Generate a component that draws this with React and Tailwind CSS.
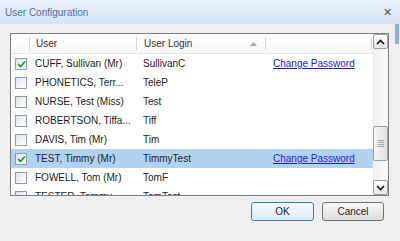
import React from 'react';

const users = [
  { name: 'CUFF, Sullivan (Mr)', login: 'SullivanC', checked: true },
  { name: 'PHONETICS, Terr...', login: 'TeleP' },
  { name: 'NURSE, Test (Miss)', login: 'Test' },
  { name: 'ROBERTSON, Tiffa...', login: 'Tiff' },
  { name: 'DAVIS, Tim (Mr)', login: 'Tim' },
  { name: 'TEST, Timmy (Mr)', login: 'TimmyTest', checked: true, selected: true },
  { name: 'FOWELL, Tom (Mr)', login: 'TomF' },
  { name: 'TESTER, Tommy...', login: 'TomTest' },
];

const CheckBox = ({ checked }) => (
  <div className="w-[12px] h-[12px] border border-[#8a9bb0] bg-gradient-to-br from-[#dfe4ea] to-[#ffffff] flex items-center justify-center">
    {checked && (
      <svg width="9" height="8" viewBox="0 0 9 8">
        <path d="M1 4 L3.5 6.5 L8 1.5" fill="none" stroke="#21a121" strokeWidth="1.8" />
      </svg>
    )}
  </div>
);

const Chevron = ({ up }) => (
  <svg width="9" height="6" viewBox="0 0 9 6">
    <path d={up ? 'M1 5 L4.5 1.5 L8 5' : 'M1 1 L4.5 4.5 L8 1'} fill="none" stroke="#111" strokeWidth="1.6" />
  </svg>
);

export default function App() {
  return (
    <div className="relative w-[400px] h-[241px] bg-[#efefef] flex flex-col font-['Liberation_Sans',Arial,sans-serif] text-[10px] text-[#222] overflow-hidden">
      <div className="h-[24px] shrink-0 flex items-center justify-between pl-[5px] pr-[8px] bg-gradient-to-b from-[#e8f0fa] to-[#d7e4f4]">
        <span className="text-[#4f6f9e]">User Configuration</span>
        <span className="text-[#555] text-[11px]">✕</span>
      </div>
      <div className="absolute right-[1px] top-[24px] w-[4px] h-[20px] bg-[#8cb0dc]" />

      <div className="flex-1 flex flex-col pl-[10px] pr-[11px] pt-[9px]">
        <div className="h-[163px] border border-[#7c7f85] bg-white flex">
          <div className="flex-1 flex flex-col overflow-hidden">
            <div className="h-[20px] shrink-0 flex items-center border-b border-[#e3e3e3] bg-gradient-to-b from-white to-[#f6f6f6] text-[#333]">
              <div className="w-[19px] h-[13px] border-r border-[#d5d5d5]" />
              <div className="w-[107px] h-[13px] border-r border-[#d5d5d5] pl-[6px] flex items-center">User</div>
              <div className="w-[129px] h-[13px] border-r border-[#d5d5d5] pl-[7px] pr-[8px] flex items-center justify-between">
                <span>User Login</span>
                <svg width="7" height="4" viewBox="0 0 7 4">
                  <path d="M0 4 L3.5 0 L7 4 Z" fill="#a8a8a8" />
                </svg>
              </div>
              <div className="w-[106px] h-[13px] border-r border-[#d5d5d5]" />
            </div>
            {users.map((u) => (
              <div
                key={u.name}
                className={`h-[19px] shrink-0 flex items-center ${u.selected ? 'bg-[#b3d2f0]' : ''}`}
              >
                <div className="w-[19px] pl-[4px]">
                  <CheckBox checked={u.checked} />
                </div>
                <div className="w-[107px] pl-[5px] whitespace-nowrap overflow-hidden">{u.name}</div>
                <div className="w-[129px] pl-[6px] whitespace-nowrap">{u.login}</div>
                <div className="w-[107px] pl-[7px] whitespace-nowrap">
                  {u.checked && <span className="text-[#2020e0] underline">Change Password</span>}
                </div>
              </div>
            ))}
          </div>

          <div className="w-[15px] shrink-0 flex flex-col bg-gradient-to-r from-[#eeeeee] to-[#fbfbfb]">
            <div className="h-[15px] border border-[#9c9c9c] rounded-[2px] bg-gradient-to-b from-white to-[#e6e6e6] flex items-center justify-center">
              <Chevron up />
            </div>
            <div className="flex-1 flex flex-col pt-[77px]">
              <div className="h-[35px] border border-[#9c9c9c] rounded-[2px] bg-gradient-to-r from-[#f4f4f4] to-[#e2e2e2] flex flex-col items-center justify-center gap-[1px]">
                <div className="w-[6px] h-[1px] bg-[#aaa]" />
                <div className="w-[6px] h-[1px] bg-[#aaa]" />
                <div className="w-[6px] h-[1px] bg-[#aaa]" />
                <div className="w-[6px] h-[1px] bg-[#aaa]" />
              </div>
            </div>
            <div className="h-[15px] border border-[#9c9c9c] rounded-[2px] bg-gradient-to-b from-white to-[#e6e6e6] flex items-center justify-center">
              <Chevron />
            </div>
          </div>
        </div>

        <div className="flex justify-end gap-[8px] mt-[6px] pr-[5px]">
          <button className="w-[63px] h-[19px] rounded-[3px] border border-[#3c7fb1] bg-gradient-to-b from-[#f6fbfe] to-[#dde9f4] text-[10px] text-[#222] flex items-center justify-center">
            OK
          </button>
          <button className="w-[62px] h-[19px] rounded-[3px] border border-[#707070] bg-gradient-to-b from-[#f8f8f8] to-[#dcdcdc] text-[10px] text-[#222] flex items-center justify-center">
            Cancel
          </button>
        </div>
      </div>
    </div>
  );
}
